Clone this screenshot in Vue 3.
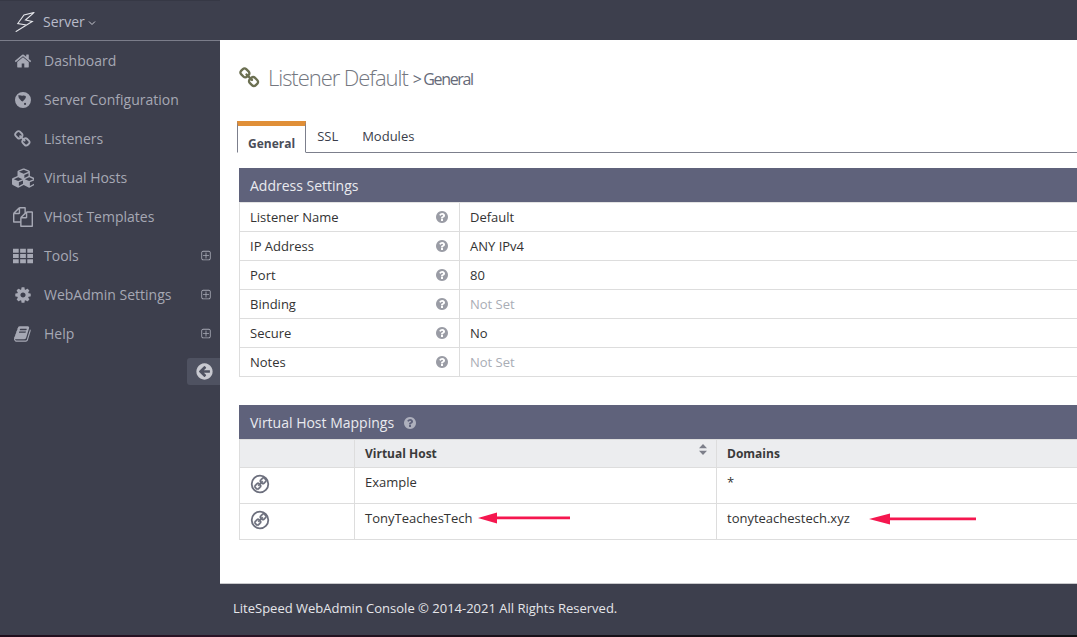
<template>
  <div class="page">
    <header class="topbar">
      <div class="logo-box">
        <svg class="logo" viewBox="0 0 20 20" fill="none" stroke="#e4e5ea" stroke-width="1.1" stroke-linejoin="miter">
          <path d="M19.3 0.4 L9 3 L2.8 11.5 L11.5 13 L0.7 19.7 L17.3 9.5 L10.5 8 Z" />
        </svg>
        <span class="server">Server</span>
        <svg class="caret" viewBox="0 0 8 6" fill="none" stroke="#c9cad2" stroke-width="1"><path d="M1 1.5 L4 4.5 L7 1.5" /></svg>
      </div>
    </header>

    <div class="body">
      <aside class="sidebar">
        <a v-for="item in menu" :key="item.label" class="nav-item">
          <span class="nav-icon">
            <svg :viewBox="item.box || '0 0 1792 1792'" :width="item.size || 18" :height="item.size || 18" fill="currentColor"><path :d="item.d" fill-rule="evenodd" /></svg>
          </span>
          <span class="nav-label">{{ item.label }}</span>
          <svg v-if="item.more" class="plus" viewBox="0 0 1792 1792" fill="currentColor"><path :d="icons.plus" /></svg>
        </a>
        <div class="collapse">
          <svg viewBox="0 0 1792 1792" width="19" height="19" fill="currentColor"><path :d="icons.back" /></svg>
        </div>
      </aside>

      <main class="main">
        <div class="content">
          <h1 class="title">
            <svg class="title-icon" viewBox="0 0 1792 1792" fill="currentColor"><path :d="icons.link" /></svg>
            <span class="title-text">Listener Default</span>
            <small>&gt; General</small>
          </h1>

          <ul class="tabs">
            <li class="tab active">General</li>
            <li class="tab">SSL</li>
            <li class="tab">Modules</li>
          </ul>

          <section class="panel">
            <h2 class="panel-head">Address Settings</h2>
            <div class="kv">
              <div v-for="row in settings" :key="row.name" class="kv-row">
                <div class="kv-name">
                  <span>{{ row.name }}</span>
                  <svg class="help" viewBox="0 0 1792 1792" fill="currentColor"><path :d="icons.help" /></svg>
                </div>
                <div class="kv-value" :class="{ unset: row.value === 'Not Set' }">{{ row.value }}</div>
              </div>
            </div>
          </section>

          <section class="panel mappings">
            <h2 class="panel-head">
              Virtual Host Mappings
              <svg class="help head-help" viewBox="0 0 1792 1792" fill="currentColor"><path :d="icons.help" /></svg>
            </h2>
            <div class="map-grid map-thead">
              <div class="cell"></div>
              <div class="cell sortable">
                Virtual Host
                <svg class="sort" viewBox="0 0 8 11" fill="currentColor"><path d="M4 0 L8 4.3 H0 Z M4 11 L0 6.7 H8 Z" /></svg>
              </div>
              <div class="cell">Domains</div>
            </div>
            <div v-for="row in mappings" :key="row.host" class="map-grid map-row">
              <div class="cell icon-cell">
                <svg class="circle-link" viewBox="0 0 20 20">
                  <circle cx="10" cy="10" r="8.3" fill="none" stroke="currentColor" stroke-width="1.8" />
                  <g transform="translate(17 3) scale(-0.0078 0.0078)" fill="currentColor" stroke="currentColor" stroke-width="50"><path :d="icons.link" /></g>
                </svg>
              </div>
              <div class="cell"><span class="val">{{ row.host }}</span>
                <svg v-if="row.arrow" class="arrow arrow-host" viewBox="0 0 92 12"><path d="M0 6 L19 0.5 L19 4.6 L92 4.6 L92 7.2 L19 7.2 L19 11.5 Z" /></svg>
              </div>
              <div class="cell"><span class="val">{{ row.domain }}</span>
                <svg v-if="row.arrow" class="arrow arrow-domain" viewBox="0 0 107 12"><path d="M0 6 L21 0.5 L21 4.6 L107 4.6 L107 7.2 L21 7.2 L21 11.5 Z" /></svg>
              </div>
            </div>
          </section>
        </div>

        <footer class="footer">LiteSpeed WebAdmin Console © 2014-2021 All Rights Reserved.</footer>
      </main>
    </div>
    <div class="strip"></div>
  </div>
</template>

<script setup>
const icons = {
  link: 'M1456 1216q0-40-28-68l-208-208q-28-28-68-28-42 0-72 32 3 3 19 18.5t21.5 21.5 15 19 13 25.5 3.5 27.5q0 40-28 68t-68 28q-15 0-27.5-3.5t-25.5-13-19-15-21.5-21.5-18.5-19q-33 31-33 73 0 40 28 68l206 207q27 27 68 27 40 0 68-26l147-146q28-28 28-67zm-703-705q0-40-28-68l-206-207q-28-28-68-28-39 0-68 27l-147 146q-28 28-28 67 0 40 28 68l208 208q27 27 68 27 42 0 72-31-3-3-19-18.5t-21.5-21.5-15-19-13-25.5-3.5-27.5q0-40 28-68t68-28q15 0 27.5 3.5t25.5 13 19 15 21.5 21.5 18.5 19q33-31 33-73zm895 705q0 120-85 203l-147 146q-83 83-203 83-121 0-204-85l-206-207q-83-83-83-203 0-123 88-209l-88-88q-86 88-208 88-120 0-204-84l-208-208q-84-84-84-204t85-203l147-146q83-83 203-83 121 0 204 85l206 207q83 83 83 203 0 123-88 209l88 88q86-88 208-88 120 0 204 84l208 208q84 84 84 204z',
  plus: 'M1344 800v64q0 14-9 23t-23 9h-352v352q0 14-9 23t-23 9h-64q-14 0-23-9t-9-23v-352h-352q-14 0-23-9t-9-23v-64q0-14 9-23t23-9h352v-352q0-14 9-23t23-9h64q14 0 23 9t9 23v352h352q14 0 23 9t9 23zm128 448v-832q0-66-47-113t-113-47h-832q-66 0-113 47t-47 113v832q0 66 47 113t113 47h832q66 0 113-47t47-113zm128-832v832q0 119-84.5 203.5t-203.5 84.5h-832q-119 0-203.5-84.5t-84.5-203.5v-832q0-119 84.5-203.5t203.5-84.5h832q119 0 203.5 84.5t84.5 203.5z',
  back: 'M1408 960v-128q0-26-18.5-45t-45.5-19h-502l189-189q19-19 19-45t-19-45l-91-91q-18-18-45-18t-45 18l-362 362-91 91q-18 18-18 45t18 45l91 91 362 362q18 18 45 18t45-18l91-91q18-18 18-45t-18-45l-189-189h502q26 0 45-19t18-45zm256-64q0 209-103 385.5t-279.5 279.5-385.5 103-385.5-103-279.5-279.5-103-385.5 103-385.5 279.5-279.5 385.5-103 385.5 103 279.5 279.5 103 385.5z',
  help: 'M1024 1376v-192q0-14-9-23t-23-9h-192q-14 0-23 9t-9 23v192q0 14 9 23t23 9h192q14 0 23-9t9-23zm256-672q0-88-55.5-163t-138.5-116-170-41q-243 0-371 213-15 24 8 42l132 100q7 6 19 6 16 0 25-12 53-68 86-92 34-24 86-24 48 0 85.5 26t37.5 59q0 38-20 61t-68 45q-63 28-115.5 86.5t-52.5 125.5v36q0 14 9 23t23 9h192q14 0 23-9t9-23q0-19 21.5-49.5t54.5-49.5q32-18 49-28.5t46-35 44.5-48 28-60.5 12.5-81zm384 192q0 209-103 385.5t-279.5 279.5-385.5 103-385.5-103-279.5-279.5-103-385.5 103-385.5 279.5-279.5 385.5-103 385.5 103 279.5 279.5 103 385.5z'
}

const menu = [
  { label: 'Dashboard', d: 'M1472 992v480q0 26-19 45t-45 19h-384v-384h-256v384h-384q-26 0-45-19t-19-45v-480q0-1 .5-3t.5-3l575-474 575 474q1 2 1 6zm223-69l-62 74q-8 9-21 11h-3q-13 0-21-7l-692-577-692 577q-12 8-24 7-13-2-21-11l-62-74q-8-10-7-23.5t11-21.5l719-599q32-26 76-26t76 26l244 204v-195q0-14 9-23t23-9h192q14 0 23 9t9 23v408l219 182q10 8 11 21.5t-7 23.5z' },
  { label: 'Server Configuration', d: 'M896 100a796 796 0 1 0 0 1592a796 796 0 1 0 0-1592z M420 430q150-40 300 30q100 50 180-10q140-40 260 60q80 130-60 280q-120 110-230 260q-160-30-240-180q-200-130-210-440z M1100 1180a110 110 0 1 0 0 220a110 110 0 1 0 0-220z' },
  { label: 'Listeners', d: icons.link },
  { label: 'Virtual Hosts', box: '0 0 2048 1792', size: 22, d: 'M640 1632l384-192v-314l-384 164v342zm-64-454l404-173-404-173-404 173zm1088 454l384-192v-314l-384 164v342zm-64-454l404-173-404-173-404 173zm-448-293l384-165v-266l-384 164v267zm-64-379l441-189-441-189-441 189zm1088 518v416q0 36-19 67t-52 47l-448 224q-25 14-57 14t-57-14l-448-224q-4-2-7-4-2 2-6 4l-448 224q-25 14-57 14t-57-14l-448-224q-33-16-52-47t-19-67v-416q0-38 21.5-70t56.5-48l434-186v-400q0-38 21.5-70t56.5-48l448-192q23-10 50-10t50 10l448 192q35 16 56.5 48t21.5 70v400l434 186q36 16 57 48t21 70z' },
  { label: 'VHost Templates', size: 20, d: 'M1696 384q40 0 68 28t28 68v1216q0 40-28 68t-68 28h-960q-40 0-68-28t-28-68v-288h-544q-40 0-68-28t-28-68v-672q0-40 20-88t48-76l408-408q28-28 76-48t88-20h416q40 0 68 28t28 68v328q68-40 128-40h416zm-544 213l-299 299h299v-299zm-640-384l-299 299h299v-299zm196 647l316-316v-416h-384v416q0 40-28 68t-68 28h-416v640h512v-256q0-40 20-88t48-76zm956 804v-1152h-384v416q0 40-28 68t-68 28h-416v640h896z' },
  { label: 'Tools', more: true, size: 20, d: 'M0 256h512v352H0z M640 256h512v352H640z M1280 256h512v352h-512z M0 720h512v352H0z M640 720h512v352H640z M1280 720h512v352h-512z M0 1184h512v352H0z M640 1184h512v352H640z M1280 1184h512v352h-512z' },
  { label: 'WebAdmin Settings', more: true, d: 'M1152 896q0-106-75-181t-181-75-181 75-75 181 75 181 181 75 181-75 75-181zm512-109v222q0 12-8 23t-20 13l-185 28q-19 54-39 91 35 50 107 138 10 12 10 25t-9 23q-27 37-99 108t-94 71q-12 0-26-9l-138-108q-44 23-91 38-16 136-29 186-7 28-36 28h-222q-14 0-24.5-8.5t-11.5-21.5l-28-184q-49-16-90-37l-141 107q-10 9-25 9-14 0-25-11-126-114-165-168-7-10-7-23 0-12 8-23 15-21 51-66.5t54-70.5q-27-50-41-99l-183-27q-13-2-21-12.5t-8-23.5v-222q0-12 8-23t19-13l186-28q14-46 39-92-40-57-107-138-10-12-10-24 0-10 9-23 26-36 98.5-107.5t94.5-71.5q13 0 26 10l138 107q44-23 91-38 16-136 29-186 7-28 36-28h222q14 0 24.5 8.5t11.5 21.5l28 184q49 16 90 37l142-107q9-9 24-9 13 0 25 10 129 119 165 170 7 8 7 22 0 12-8 23-15 21-51 66.5t-54 70.5q26 50 41 98l183 28q13 2 21 12.5t8 23.5z' },
  { label: 'Help', more: true, d: 'M1639 478q40 57 18 129l-275 906q-19 64-76.5 107.5t-122.5 43.5h-923q-77 0-148.5-53.5t-99.5-131.5q-24-67-2-127 0-4 3-27t4-37q1-8-3-21.5t-3-19.5q2-11 8-21t16.5-23.5 16.5-23.5q23-38 45-91.5t30-91.5q3-10 .5-30t-.5-28q3-11 17-28t17-23q21-36 42-92t25-90q1-9-2.5-32t.5-28q4-13 22-30.5t22-22.5q19-26 42.5-84.5t27.5-96.5q1-8-3-25.5t-2-26.5q2-8 9-18t18-23 17-21q8-12 16.5-30.5t15-35 16-36 19.5-32 26.5-23.5 36-11.5 47.5 5.5l-1 3q38-9 51-9h761q74 0 114 56t18 130l-274 906q-36 119-71.5 153.5t-128.5 34.5h-869q-27 0-38 15-11 16-1 43 24 70 144 70h923q29 0 56-15.5t35-41.5l300-987q7-22 5-57 38 15 59 43zm-1064 2q-4 13 2 22.5t20 9.5h608q13 0 25.5-9.5t16.5-22.5l21-64q4-13-2-22.5t-20-9.5h-608q-13 0-25.5 9.5t-16.5 22.5zm-83 256q-4 13 2 22.5t20 9.5h608q13 0 25.5-9.5t16.5-22.5l21-64q4-13-2-22.5t-20-9.5h-608q-13 0-25.5 9.5t-16.5 22.5z' }
]

const settings = [
  { name: 'Listener Name', value: 'Default' },
  { name: 'IP Address', value: 'ANY IPv4' },
  { name: 'Port', value: '80' },
  { name: 'Binding', value: 'Not Set' },
  { name: 'Secure', value: 'No' },
  { name: 'Notes', value: 'Not Set' }
]

const mappings = [
  { host: 'Example', domain: '*' },
  { host: 'TonyTeachesTech', domain: 'tonyteachestech.xyz', arrow: true }
]
</script>

<style>
html, body {
  margin: 0;
  overflow: hidden;
}
</style>

<style scoped>
.page {
  width: 1077px;
  height: 637px;
  display: flex;
  flex-direction: column;
  overflow: hidden;
  background: #3d3f4d;
  font-family: "Open Sans", "Liberation Sans", sans-serif;
  font-size: 13px;
  color: #333;
}

/* Header */
.topbar {
  height: 40px;
  flex: none;
  background: #3d3f4d;
}

.logo-box {
  position: relative;
  z-index: 1;
  width: 220px;
  height: 41px;
  box-sizing: border-box;
  display: flex;
  align-items: center;
  padding-left: 15px;
  border-top: 1px solid #363845;
  border-bottom: 1px solid #7b7d8a;
}

.logo {
  width: 20px;
  height: 20px;
  margin-top: 3px;
}

.server {
  margin: 1px 0 0 8px;
  font-size: 14px;
  color: #b9bcca;
}

.caret {
  width: 8px;
  height: 6px;
  margin: 5px 0 0 3px;
}

.body {
  flex: 1;
  display: flex;
  min-height: 0;
}

/* Sidebar */
.sidebar {
  width: 220px;
  flex: none;
  box-sizing: border-box;
  padding-top: 1px;
  color: #a6a8b4;
}

.nav-item {
  height: 39px;
  display: flex;
  align-items: center;
  font-size: 14px;
}

.nav-icon {
  width: 44px;
  flex: none;
  display: flex;
  justify-content: center;
  padding-left: 2px;
  box-sizing: border-box;
}

.nav-icon svg {
  display: block;
}

.nav-label {
  flex: 1;
}

.plus {
  width: 12px;
  height: 12px;
  margin-right: 8px;
}

.collapse {
  width: 33px;
  height: 27px;
  margin: 5px 0 0 187px;
  padding-left: 2px;
  box-sizing: border-box;
  background: #4f5261;
  border-radius: 3px 0 0 3px;
  display: flex;
  align-items: center;
  justify-content: center;
  color: #c8c9d0;
}

/* Main */
.main {
  flex: 1;
  min-width: 0;
  display: flex;
  flex-direction: column;
  background: #fff;
}

.content {
  flex: 1;
  padding: 0 0 0 19px;
  width: 1000px;
}

.title {
  margin: 0;
  height: 81px;
  padding-bottom: 5px;
  box-sizing: border-box;
  display: flex;
  align-items: center;
  font-size: 22px;
  font-weight: 300;
  letter-spacing: -1.05px;
  color: #74777f;
}

.title-icon {
  width: 22px;
  height: 22px;
  margin-right: 7px;
  color: #6c7052;
}

.title-text {
  margin-top: -2px;
}

.title small {
  margin: 2px 0 0 5px;
  font-size: 16px;
  font-weight: 400;
  letter-spacing: -1.35px;
  color: #666a78;
}

.tabs {
  list-style: none;
  margin: 0 0 15px -2px;
  padding: 0;
  height: 32px;
  display: flex;
  border-bottom: 1px solid #7c7f8c;
  box-sizing: border-box;
}

.tab {
  padding: 6px 12px 0;
  font-size: 13px;
  color: #3a3d4a;
}

.tab.active {
  height: 32px;
  box-sizing: border-box;
  margin-right: -1px;
  padding: 9px 10px 0;
  border: 1px solid #7c7f8c;
  border-top: 5px solid #e08f38;
  border-bottom: 1px solid #fff;
  background: #fff;
  font-size: 12px;
  font-weight: 700;
  color: #4a4d58;
}

.panel-head {
  margin: 0;
  height: 34px;
  padding: 1px 0 0 11px;
  box-sizing: border-box;
  background: #5f627b;
  font-size: 14px;
  font-weight: 400;
  color: #e9eaef;
  display: flex;
  align-items: center;
}

.kv {
  border-left: 1px solid #ddd;
  border-top: 1px solid #e3e3e3;
}

.kv-row {
  height: 29px;
  box-sizing: border-box;
  display: flex;
  border-bottom: 1px solid #ddd;
}

.kv-name {
  width: 220px;
  flex: none;
  box-sizing: border-box;
  padding: 0 10px 0 10px;
  border-right: 1px solid #ddd;
  display: flex;
  align-items: center;
  justify-content: space-between;
}

.kv-value {
  padding-left: 10px;
  display: flex;
  align-items: center;
}

.kv-value.unset {
  color: #a9adb5;
}

.help {
  width: 14px;
  height: 14px;
  color: #9a9ca5;
}

.mappings {
  margin-top: 28px;
}

.head-help {
  margin-left: 9px;
  color: #aeb0bd;
}

.map-grid {
  display: grid;
  grid-template-columns: 115px 362px 1fr;
  border-left: 1px solid #ddd;
  border-bottom: 1px solid #ddd;
}

.map-thead {
  height: 29px;
  box-sizing: border-box;
  background: #ecedef;
  border-top: 1px solid #ddd;
  font-size: 12px;
  font-weight: 700;
  color: #3a3a3a;
}

.map-row {
  height: 36px;
  box-sizing: border-box;
}

.cell {
  position: relative;
  padding: 5px 10px 0;
  border-right: 1px solid #ddd;
  box-sizing: border-box;
}

.sort {
  position: absolute;
  top: 4px;
  right: 9px;
  width: 8px;
  height: 11px;
  color: #7d7f8a;
}

.icon-cell {
  padding: 6px 0 0 10px;
}

.circle-link {
  display: block;
  width: 20px;
  height: 20px;
  color: #6c6f7d;
}

.arrow {
  position: absolute;
  top: 8px;
  fill: #f5174f;
}

.arrow-host {
  left: 123px;
  width: 92px;
  height: 12px;
}

.arrow-domain {
  top: 9px;
  left: 152px;
  width: 107px;
  height: 12px;
}

.footer {
  flex: none;
  height: 52px;
  padding: 0 0 3px 13px;
  display: flex;
  align-items: center;
  background: #3d3f4d;
  border-top: 1px solid #c9c9cc;
  box-sizing: border-box;
  font-size: 13px;
  color: #e6e6ea;
}

.strip {
  flex: none;
  height: 2px;
  background: linear-gradient(90deg, #1f0e1c, #2a1426 20%, #171018 50%, #111114);
}
</style>
